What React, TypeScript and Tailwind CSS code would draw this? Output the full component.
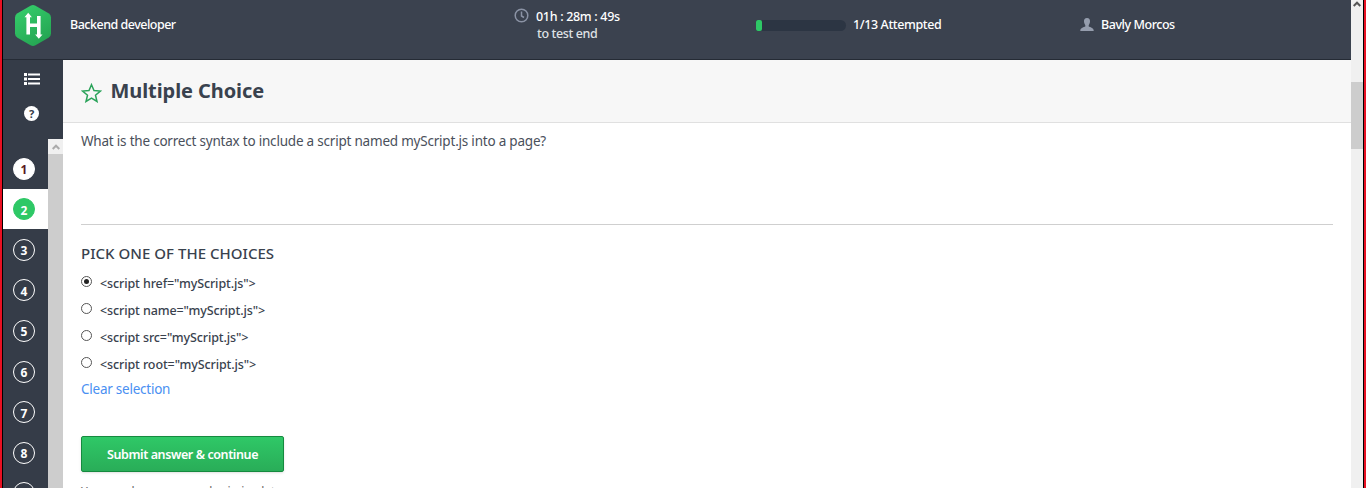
import React from "react";

const options = [
  '<script href="myScript.js">',
  '<script name="myScript.js">',
  '<script src="myScript.js">',
  '<script root="myScript.js">',
];

function Logo() {
  return (
    <svg width="38" height="42" viewBox="0 0 38 42" className="mt-[5px] ml-[11px] shrink-0">
      <defs>
        <linearGradient id="hex" x1="0" y1="0" x2="0.6" y2="1">
          <stop offset="0" stopColor="#36d16d" />
          <stop offset="1" stopColor="#25a653" />
        </linearGradient>
      </defs>
      <path d="M16.500 .7Q19 -.6 21.500 .7L34.500 8.200Q37 9.700 37 12.500V28.500Q37 31.300 34.500 32.800L21.500 40.300Q19 41.600 16.500 40.300L3.500 32.800Q1 31.300 1 28.500V12.500Q1 9.700 3.500 8.200Z" fill="url(#hex)" />
      <path d="M14.200 10v19.500M24.800 11v20M14.200 20.300h10.600" stroke="#fff" strokeWidth="3.600" fill="none" />
      <path d="M10.500 12.300L14.200 7.800L17.900 12.300ZM21.100 29.500L24.800 33.800L28.500 29.500Z" fill="#fff" />
    </svg>
  );
}

function Bubble({ n }: { n: number }) {
  const look =
    n === 1
      ? "border-white bg-white text-[#5a1a24]"
      : n === 2
        ? "border-[#2ec866] bg-[#2ec866] text-white"
        : "border-white text-white";
  return (
    <div className={`flex h-[40.600px] shrink-0 items-center pl-[10px] ${n === 2 ? "bg-white" : ""}`}>
      <span className={`flex size-[22px] items-center justify-center rounded-full border pt-[3px] text-[12px] leading-none font-bold ${look}`}>{n}</span>
    </div>
  );
}

export default function App() {
  return (
    <div className="flex h-[488px] w-[1366px] overflow-hidden border-x-2 border-[#e81123] bg-white font-['Noto_Sans','Open_Sans',sans-serif] text-[13px] text-[#39424e]">
      <div className="w-px bg-black" />
      <div className="flex w-[1348px] flex-col">
        <header className="flex h-[60px] shrink-0 border-b border-[#252b35] bg-[#3b424f] text-[12.500px] leading-[17px] font-medium tracking-[-0.38px] text-white">
          <Logo />
          <div className="mt-4 ml-[18px] w-[444px] whitespace-nowrap"><span className="tracking-[-0.5px]">Backend developer</span></div>
          <svg width="15" height="15" viewBox="0 0 15 15" className="mt-[8px]" fill="none" stroke="#8b93a5" strokeWidth="1.500">
            <circle cx="7.500" cy="7.500" r="6.300" /><path d="M7.500 3.500V8L10 9.500" />
          </svg>
          <div className="mt-2 ml-[7px] w-[220px] whitespace-nowrap">
            <div><span className="tracking-[-0.310px]">01h : 28m : 49s</span></div>
            <div className="pl-px text-[#dfe1e5]"><span>to test end</span></div>
          </div>
          <div className="mt-5 h-[11px] w-[90px] overflow-hidden rounded-l-[2px] rounded-r-full bg-[#2c3543]"><div className="h-full w-[6px] rounded-[2px] bg-[#2ec866]" /></div>
          <div className="mt-4 ml-[7px] w-[227px] whitespace-nowrap"><span>1/13 Attempted</span></div>
          <svg width="14" height="13" viewBox="0 0 14 13" className="mt-[18px]" fill="#959dad"><path d="M7 0C9.200 0 10.200 1.500 10 3.800C9.900 5.500 9.100 6.300 8.700 7.200V8.500C10 9.300 13.500 9.500 13.700 12.500V13H.3V12.500C.5 9.500 4 9.300 5.300 8.500V7.200C4.900 6.300 4.100 5.500 4 3.800C3.800 1.500 4.800 0 7 0Z" /></svg>
          <div className="mt-4 ml-[7px] whitespace-nowrap"><span className="tracking-[-0.450px]">Bavly Morcos</span></div>
        </header>
        <div className="flex h-[428px]">
          <aside className="flex w-[60px] shrink-0 flex-col bg-[#353c48]">
            <div className="flex h-[79px] shrink-0 flex-col pl-[21px]">
              <svg width="16" height="12" viewBox="0 0 16 12" className="mt-[13px]" fill="#fff"><path d="M0 0h3v3H0zM4 .5h12v2H4zM0 4.500h3v3H0zM4 5h12v2H4zM0 9h3v3H0zM4 9.500h12v2H4z" /></svg>
              <div className="mt-[21px] flex size-[15px] items-center justify-center rounded-full bg-white text-[11px] leading-none font-bold text-[#353c48]">?</div>
            </div>
            <div className="flex h-[349px]">
              <div className="flex w-[45px] flex-col overflow-hidden pt-[9.300px]">
                {[1, 2, 3, 4, 5, 6, 7, 8, 9].map((n) => <Bubble key={n} n={n} />)}
              </div>
              <div className="w-[15px] bg-[#cdcdcd]"><div className="flex h-[15px] items-center justify-center bg-[#f0f0f0]"><svg width="8" height="6" viewBox="0 0 8 6" fill="none" stroke="#aaa" strokeWidth="2"><path d="M.7 5L4 1.700L7.300 5" /></svg></div></div>
            </div>
          </aside>
          <main className="w-[1288px]">
            <div className="flex h-[63px] border-b border-[#e0e0e0] bg-[#f7f7f7] pl-[18px]">
              <svg width="21" height="20" viewBox="0 0 21 20" className="mt-[23px]" fill="none" stroke="#2ba35a" strokeWidth="1.500"><path d="M10.500 1.700L13 7.600L19.400 8.100L14.500 12.200L16 18.500L10.500 15.100L5 18.500L6.500 12.200L1.600 8.100L8 7.600Z" /></svg>
              <h1 className="mt-[17px] ml-[8.500px] text-[20px] leading-[28px] font-bold tracking-[-0.080px]"><span>Multiple Choice</span></h1>
            </div>
            <div className="mx-[18px] flex h-[102px] border-b border-[#cfcfcf] pt-[8px] text-[13.500px] leading-5 tracking-[-0.210px] text-[#4a505b]"><span>What is the correct syntax to include a script named myScript.js into a page?</span></div>
            <div className="px-[18px]">
              <h2 className="mt-[17px] h-[27px] text-[15px] leading-[22px] font-medium tracking-[0.030px]"><span>PICK ONE OF THE CHOICES</span></h2>
              {options.map((text, i) => (
                <div key={text} className="flex h-[27px] text-[12.500px] leading-[29px] font-medium tracking-[-0.110px]">
                  <span className="mt-[7px] mr-[8px] flex size-[11px] items-center justify-center rounded-full border border-[#555]">{i === 0 && <i className="size-[5px] rounded-full bg-[#222]" />}</span>
                  <span>{text}</span>
                </div>
              ))}
              <div className="h-[59px] pt-px text-[13.500px] leading-[22px] tracking-[-0.240px] text-[#4a90f2]"><span>Clear selection</span></div>
              <button className="flex h-[36px] w-[203px] items-center justify-center rounded-[2px] border border-[#158a3f] bg-gradient-to-b from-[#2fc867] to-[#29ad58] pt-[3px] text-[12.500px] font-semibold tracking-[-0.400px] text-white shadow-sm"><span>Submit answer &amp; continue</span></button>
              <p className="mt-[10px] text-[12px] leading-5 tracking-[-0.240px] text-[#666]"><span>You can change your submission later</span></p>
            </div>
          </main>
        </div>
      </div>
      <div className="flex w-[12px] flex-col items-center bg-[#f0f0f0]">
        <svg width="8" height="7" viewBox="0 0 8 7" fill="none" stroke="#555" strokeWidth="2"><path d="M.7 6L4 2.700L7.300 6" /></svg>
        <div className="mt-[75px] h-[67px] w-full bg-[#cdcdcd]" />
      </div>
      <div className="w-px bg-black" />
    </div>
  );
}
